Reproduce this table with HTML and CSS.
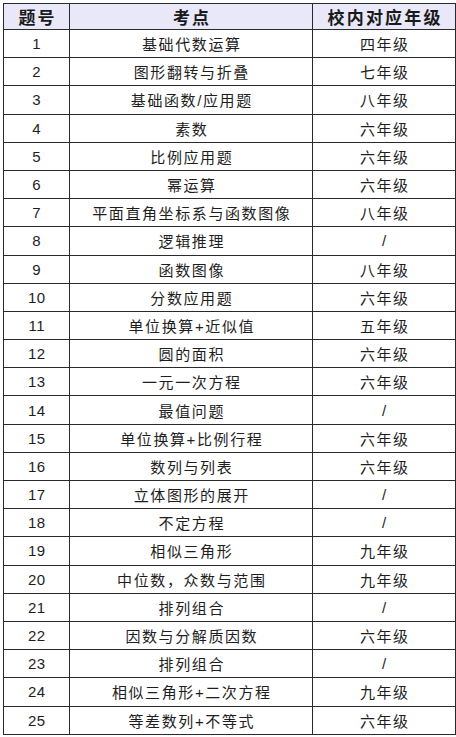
FILE: index.html
```html
<!DOCTYPE html>
<html lang="zh">
<head>
<meta charset="utf-8">
<link rel="stylesheet" href="styles.css">
</head>
<body>
<table class="grid">
  <colgroup><col class="c1"><col class="c2"><col class="c3"></colgroup>
  <thead>
    <tr><th>题号</th><th>考点</th><th>校内对应年级</th></tr>
  </thead>
  <tbody>
    <tr><td>1</td><td>基础代数运算</td><td>四年级</td></tr>
    <tr><td>2</td><td>图形翻转与折叠</td><td>七年级</td></tr>
    <tr><td>3</td><td>基础函数/应用题</td><td>八年级</td></tr>
    <tr><td>4</td><td>素数</td><td>六年级</td></tr>
    <tr><td>5</td><td>比例应用题</td><td>六年级</td></tr>
    <tr><td>6</td><td>幂运算</td><td>六年级</td></tr>
    <tr><td>7</td><td>平面直角坐标系与函数图像</td><td>八年级</td></tr>
    <tr><td>8</td><td>逻辑推理</td><td>/</td></tr>
    <tr><td>9</td><td>函数图像</td><td>八年级</td></tr>
    <tr><td>10</td><td>分数应用题</td><td>六年级</td></tr>
    <tr><td>11</td><td>单位换算+近似值</td><td>五年级</td></tr>
    <tr><td>12</td><td>圆的面积</td><td>六年级</td></tr>
    <tr><td>13</td><td>一元一次方程</td><td>六年级</td></tr>
    <tr><td>14</td><td>最值问题</td><td>/</td></tr>
    <tr><td>15</td><td>单位换算+比例行程</td><td>六年级</td></tr>
    <tr><td>16</td><td>数列与列表</td><td>六年级</td></tr>
    <tr><td>17</td><td>立体图形的展开</td><td>/</td></tr>
    <tr><td>18</td><td>不定方程</td><td>/</td></tr>
    <tr><td>19</td><td>相似三角形</td><td>九年级</td></tr>
    <tr><td>20</td><td>中位数，众数与范围</td><td>九年级</td></tr>
    <tr><td>21</td><td>排列组合</td><td>/</td></tr>
    <tr><td>22</td><td>因数与分解质因数</td><td>六年级</td></tr>
    <tr><td>23</td><td>排列组合</td><td>/</td></tr>
    <tr><td>24</td><td>相似三角形+二次方程</td><td>九年级</td></tr>
    <tr><td>25</td><td>等差数列+不等式</td><td>六年级</td></tr>
  </tbody>
</table>
</body>
</html>
```
FILE: styles.css
```css
html, body {
  margin: 0;
  padding: 0;
  background: #ffffff;
}
body {
  padding: 3px 0 0 3px;
  font-family: "Liberation Sans", "Noto Sans CJK SC", sans-serif;
  color: #1e1e1e;
}
.grid {
  border-collapse: collapse;
  table-layout: fixed;
  width: 452px;
}
.c1 { width: 66px; }
.c2 { width: 243px; }
.c3 { width: 143px; }
.grid th, .grid td {
  border: 1px solid #2a2a2a;
  text-align: center;
  padding: 0;
  white-space: nowrap;
}
.grid th {
  background: #e9e8f8;
  font-size: 17px;
  font-weight: bold;
  letter-spacing: 2.2px;
  padding-left: 2.2px;
  height: 25px;
  color: #1a1a1a;
}
.grid td {
  font-size: 15px;
  letter-spacing: 1.6px;
  padding-left: 1.6px;
  height: 27.2px;
}
.grid td:first-child {
  letter-spacing: 0.5px;
  padding-left: 0.5px;
}
```
